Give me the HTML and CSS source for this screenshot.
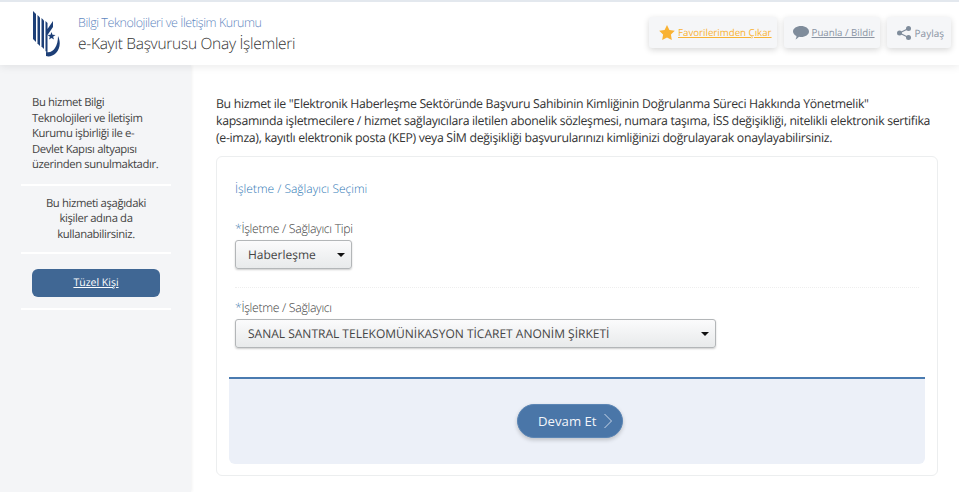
FILE: index.html
```html
<!DOCTYPE html>
<html lang="tr">
<head>
    <meta charset="UTF-8">
    <title>e-Kayıt Başvurusu Onay İşlemleri</title>
    <link rel="stylesheet" href="styles.css">
</head>
<body>
    <header class="topbar">
        <div class="brand">
            <svg class="logo" width="28" height="46" viewBox="0 0 28 46">
                <path d="M1 0 L4 3 V31 L1 28 Z" fill="#1d3f77"/>
                <path d="M5.500 4 L8 6.500 V35 L5.500 32.500 Z" fill="#1d3f77"/>
                <path d="M9.500 7 L12 9.500 V38 L9.500 35.500 Z" fill="#1d3f77"/>
                <path d="M13.500 10 L15.500 12 V18 L21 10 V16 L15.500 24 V42 L13.500 40 Z" fill="#1d3f77"/>
                <path d="M26 25 C29 31 28 38 24 42 C21 45 17 46 14 45 L14 41 C18 42 21 40 23 37 C25 34 26 30 26 25 Z" fill="#1d3f77"/>
                <path d="M19.500 21 l1 2.800 3 .1 -2.400 1.800 .9 2.900 -2.500 -1.700 -2.500 1.700 .9 -2.900 -2.400 -1.800 3 -.1 Z" fill="#1d3f77"/>
            </svg>
            <div class="brand-text">
                <div class="org">Bilgi Teknolojileri ve İletişim Kurumu</div>
                <div class="service">e-Kayıt Başvurusu Onay İşlemleri</div>
            </div>
        </div>
        <div class="actions">
            <a class="action fav" href="#">
                <svg width="16" height="15" viewBox="0 0 24 23"><path d="M12 0 l3.700 7.600 8.300 1.200 -6 5.900 1.400 8.300 -7.400 -3.900 -7.400 3.900 1.400 -8.300 -6 -5.900 8.300 -1.200 Z" fill="#f9b233"/></svg>
                <span class="link">Favorilerimden Çıkar</span>
            </a>
            <a class="action rate" href="#">
                <svg width="16" height="14" viewBox="0 0 16 14"><path d="M8 0 C12.400 0 16 2.400 16 5.500 S12.400 11 8 11 C7.300 11 6.700 11 6 10.800 C5 12 3.800 13 2.500 13.500 C3.200 12.500 3.500 11.300 3.500 10 C1.400 9 0 7.400 0 5.500 C0 2.400 3.600 0 8 0 Z" fill="#7f8c9b"/></svg>
                <span class="link">Puanla / Bildir</span>
            </a>
            <a class="action share" href="#">
                <svg width="14" height="14" viewBox="0 0 14 14">
                    <circle cx="2.500" cy="7" r="2.500" fill="#7f8c9b"/>
                    <circle cx="11.500" cy="2.500" r="2.500" fill="#7f8c9b"/>
                    <circle cx="11.500" cy="11.500" r="2.500" fill="#7f8c9b"/>
                    <path d="M2.500 7 L11.500 2.500 M2.500 7 L11.500 11.500" stroke="#7f8c9b" stroke-width="1.300"/>
                </svg>
                <span>Paylaş</span>
            </a>
        </div>
    </header>

    <div class="page">
        <aside class="sidebar">
            <p class="side-info">Bu hizmet Bilgi Teknolojileri ve İletişim Kurumu işbirliği ile e-Devlet Kapısı altyapısı üzerinden sunulmaktadır.</p>
            <p class="side-note">Bu hizmeti aşağıdaki kişiler adına da kullanabilirsiniz.</p>
            <div class="side-btn-row">
                <a class="side-btn" href="#">Tüzel Kişi</a>
            </div>
        </aside>

        <main class="content">
            <p class="intro">Bu hizmet ile "Elektronik Haberleşme Sektöründe Başvuru Sahibinin Kimliğinin Doğrulanma Süreci Hakkında Yönetmelik" kapsamında işletmecilere / hizmet sağlayıcılara iletilen abonelik sözleşmesi, numara taşıma, İSS değişikliği, nitelikli elektronik sertifika (e-imza), kayıtlı elektronik posta (KEP) veya SİM değişikliği başvurularınızı kimliğinizi doğrulayarak onaylayabilirsiniz.</p>

            <form class="card">
                <div class="fields">
                    <h2 class="card-title">İşletme / Sağlayıcı Seçimi</h2>
                    <div class="field first">
                        <label><span class="req">*</span>İşletme / Sağlayıcı Tipi</label>
                        <div class="select small"><span>Haberleşme</span><i class="caret"></i></div>
                    </div>
                    <div class="field">
                        <label><span class="req">*</span>İşletme / Sağlayıcı</label>
                        <div class="select wide"><span>SANAL SANTRAL TELEKOMÜNİKASYON TİCARET ANONİM ŞİRKETİ</span><i class="caret"></i></div>
                    </div>
                </div>
                <div class="form-foot">
                    <button class="next" type="button">Devam Et
                        <svg width="10" height="16" viewBox="0 0 10 16"><path d="M1.500 1 L8.500 8 L1.500 15" fill="none" stroke="#c9d6e8" stroke-width="1"/></svg>
                    </button>
                </div>
            </form>
        </main>
    </div>
</body>
</html>
```

FILE: styles.css
```css
* {
    box-sizing: border-box;
}

html, body {
    height: 100%;
}

body {
    margin: 0;
    font-family: "Open Sans", sans-serif;
    color: #3d3d3d;
    background: #fff;
    overflow: hidden;
    text-rendering: geometricPrecision;
}

a {
    color: inherit;
}

.topbar {
    height: 65px;
    display: flex;
    justify-content: space-between;
    align-items: center;
    padding: 0 8px 0 32px;
    background: #fff;
    border-top: 2px solid #e3e8ee;
    box-shadow: 0 2px 8px rgba(0, 0, 0, 0.08);
    position: relative;
    z-index: 2;
}

.brand {
    display: flex;
    align-items: center;
    gap: 18px;
}

.org {
    font-size: 12.500px;
    font-weight: 300;
    line-height: 18px;
    color: #5f87c0;
    letter-spacing: -0.45px;
}

.service {
    font-size: 15.500px;
    font-weight: 300;
    line-height: 22px;
    color: #333;
    letter-spacing: -0.28px;
}

.actions {
    display: flex;
    gap: 7px;
    margin-bottom: 2px;
}

.action {
    height: 31px;
    display: flex;
    align-items: center;
    gap: 3px;
    font-size: 9.700px;
    text-decoration: none;
    background: #f5f6f8;
    border-radius: 3px;
    box-shadow: 0 2px 6px rgba(0, 0, 0, 0.16);
    color: #8a94a3;
}

.action .link {
    text-decoration: underline;
}

.fav {
    padding: 0 5px 0 10px;
    color: #f9b233;
}

.rate {
    padding: 0 5px 0 9px;
}

.share {
    gap: 4px;
    font-size: 10px;
    padding: 0 7px 0 10px;
}

.page {
    display: flex;
    height: 427px;
}

.sidebar {
    width: 191px;
    flex: none;
    padding: 30px 20px 0 21px;
    background: #f4f5f7;
    box-shadow: 1px 0 3px rgba(0, 0, 0, 0.06);
    font-size: 11.300px;
    line-height: 15.500px;
    letter-spacing: -0.38px;
    color: #444;
}

.sidebar p {
    margin: 0;
}

.side-info {
    padding: 0 11px 11px;
    border-bottom: 2px solid #fff;
}

.side-note {
    padding: 10px 11px;
    text-align: center;
    border-bottom: 2px solid #fff;
}

.side-btn-row {
    padding: 15px 11px 11px;
    border-bottom: 2px solid #fff;
}

.side-btn {
    display: block;
    height: 28px;
    line-height: 28px;
    text-align: center;
    font-size: 10.500px;
    letter-spacing: 0;
    color: #fff;
    background: #406794;
    border-radius: 6px;
}

.content {
    flex: 1;
    padding: 29.500px 28px 0 25px;
}

.intro {
    margin: 0 0 10.500px;
    font-size: 12.300px;
    line-height: 17px;
    letter-spacing: -0.32px;
    color: #333;
}

.card {
    height: 320px;
    margin-right: -7px;
    display: flex;
    flex-direction: column;
    border: 1px solid #eceeef;
    border-radius: 6px;
    padding: 0 12px 11px;
}

.fields {
    flex: 1;
    padding: 23px 6px 0;
}

.card-title {
    margin: 0 0 23px;
    font-size: 12px;
    line-height: 18px;
    font-weight: 300;
    color: #2f78b5;
}

.field label {
    display: block;
    font-size: 12.300px;
    font-weight: 300;
    line-height: 16px;
    letter-spacing: -0.33px;
    color: #444;
    margin-bottom: 3px;
}

.field.first {
    padding-bottom: 18px;
    margin-bottom: 12px;
    border-bottom: 1px dotted #eee;
}

.req {
    color: #4a7cb0;
}

.select {
    height: 29px;
    display: flex;
    justify-content: space-between;
    align-items: center;
    padding: 0 6px 0 12px;
    font-size: 12px;
    color: #444;
    background: linear-gradient(#fbfbfc, #e8eaeb);
    border: 1px solid #b3b6b8;
    border-radius: 3px;
    box-shadow: 0 1px 2px rgba(0, 0, 0, 0.2);
}

.select.small {
    width: 117px;
}

.select.wide {
    width: 481px;
}

.caret {
    width: 0;
    height: 0;
    border-left: 4px solid transparent;
    border-right: 4px solid transparent;
    border-top: 4px solid #111;
}

.form-foot {
    height: 87px;
    flex: none;
    display: flex;
    justify-content: center;
    align-items: center;
    padding: 0 14px 1px 0;
    background: #ecf0f8;
    border-top: 2px solid #4a7bb0;
    border-radius: 0 0 6px 6px;
}

.next {
    width: 106px;
    height: 34px;
    display: flex;
    align-items: center;
    gap: 6px;
    padding: 0 0 0 20px;
    font-family: inherit;
    font-size: 13.200px;
    color: #f2f5fa;
    background: #4a76a8;
    border: 1px solid #5c86b5;
    border-radius: 17px;
    box-shadow: 0 2px 4px rgba(0, 0, 0, 0.2);
}
```
